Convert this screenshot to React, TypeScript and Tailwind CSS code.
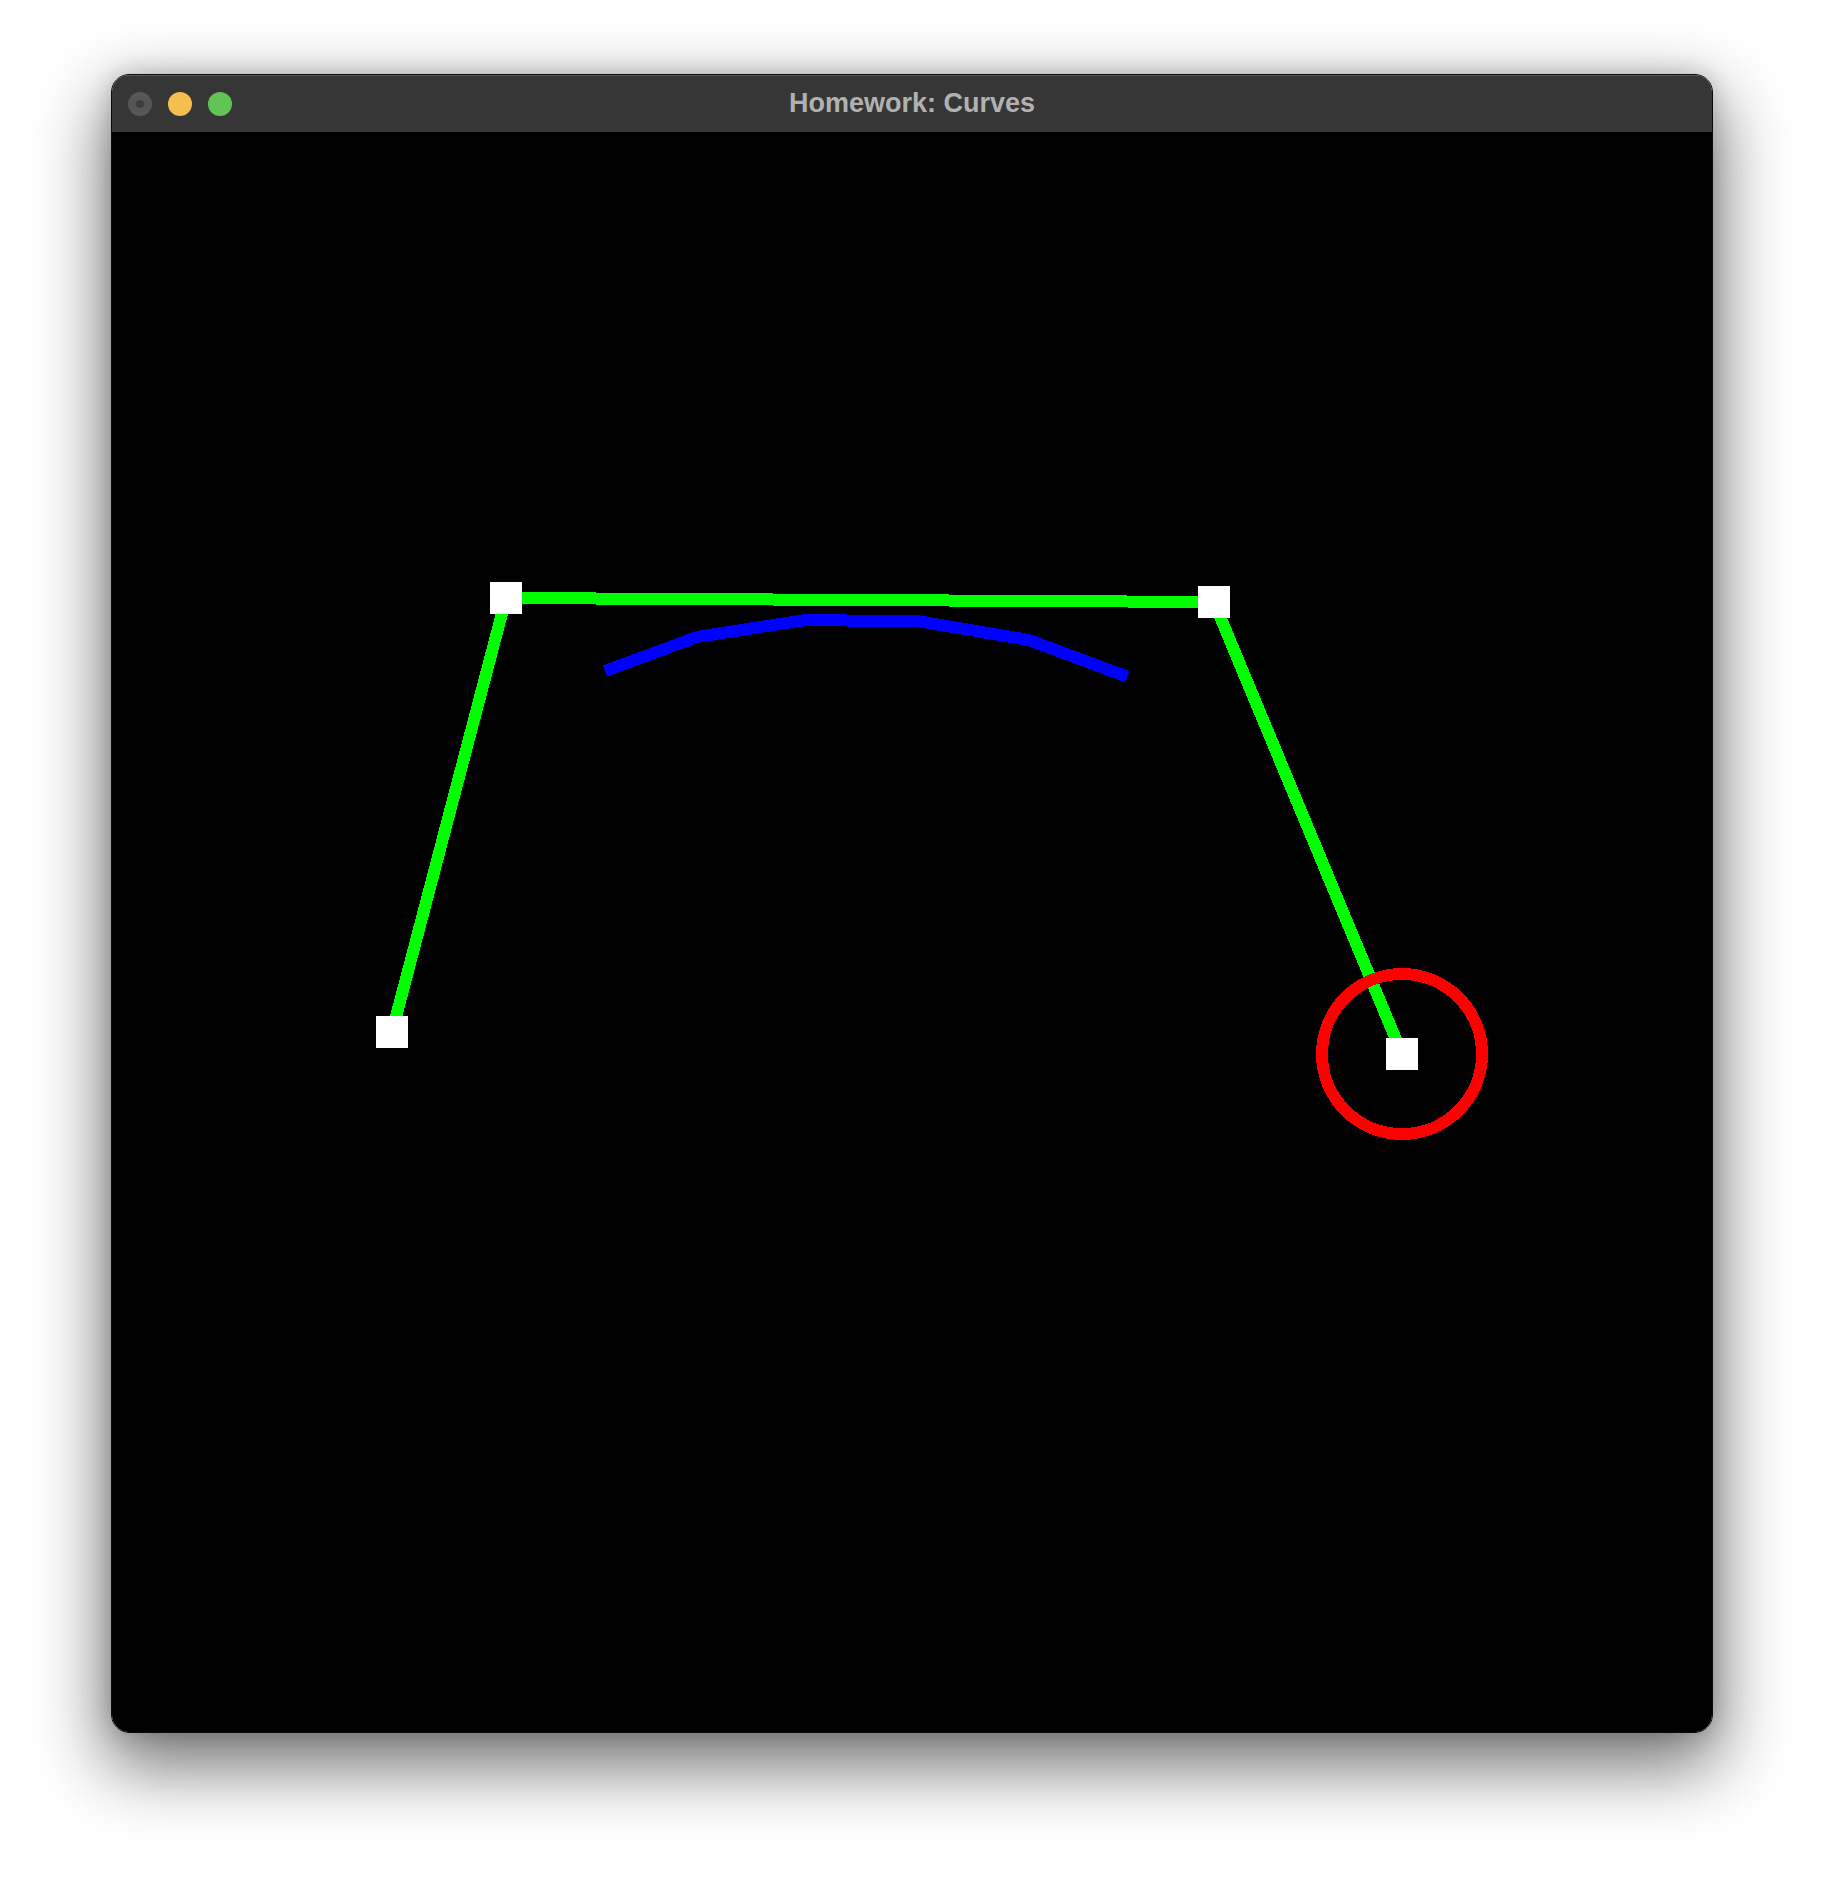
import React from "react";

const P = [
  [280, 900],
  [394, 466],
  [1102, 470],
  [1290, 922],
];

function bspline(n: number) {
  const pts: string[] = [];
  for (let i = 0; i <= n; i++) {
    const t = i / n;
    const b0 = ((1 - t) ** 3) / 6;
    const b1 = (3 * t ** 3 - 6 * t ** 2 + 4) / 6;
    const b2 = (-3 * t ** 3 + 3 * t ** 2 + 3 * t + 1) / 6;
    const b3 = t ** 3 / 6;
    const x = b0 * P[0][0] + b1 * P[1][0] + b2 * P[2][0] + b3 * P[3][0];
    const y = b0 * P[0][1] + b1 * P[1][1] + b2 * P[2][1] + b3 * P[3][1];
    pts.push(`${x.toFixed(1)},${y.toFixed(1)}`);
  }
  return pts.join(" ");
}

export default function App() {
  const curve = bspline(5);
  return (
    <div className="w-[1824px] h-[1880px] bg-white pt-[74px] pl-[111px]" style={{ fontFamily: '"Liberation Sans", Arial, sans-serif' }}>
      <div className="w-[1602px] rounded-[18px] border border-[#0a0a0a] overflow-hidden shadow-[0_28px_70px_6px_rgba(0,0,0,0.55),0_0_24px_rgba(0,0,0,0.18)]">
        <div className="relative h-[57px] bg-[#363636] border-t border-[#5a5a5a] flex items-center">
          <div className="flex items-center gap-4 pl-[16px]">
            <div className="w-6 h-6 rounded-full bg-[#565656] flex items-center justify-center">
              <div className="w-2 h-2 rounded-full bg-[#3e3e3e]" />
            </div>
            <div className="w-6 h-6 rounded-full bg-[#f4bf4f]" />
            <div className="w-6 h-6 rounded-full bg-[#61c554]" />
          </div>
          <div className="absolute inset-0 flex items-center justify-center text-[27px] font-bold text-[#b1b1b1] pb-[1px]">
            Homework: Curves
          </div>
        </div>
        <div className="w-[1600px] h-[1600px] bg-black">
          <svg width="1600" height="1600" viewBox="0 0 1600 1600" className="block" shapeRendering="crispEdges">
            <polyline
              points={P.map((p) => p.join(",")).join(" ")}
              fill="none"
              stroke="#00ff00"
              strokeWidth={12}
              strokeLinejoin="miter"
            />
            <polyline points={curve} fill="none" stroke="#0000ff" strokeWidth={12} strokeLinejoin="bevel" />
            <circle cx={P[3][0]} cy={P[3][1]} r={80} fill="none" stroke="#ff0000" strokeWidth={12} />
            {P.map((p, i) => (
              <rect key={i} x={p[0] - 16} y={p[1] - 16} width={32} height={32} fill="#ffffff" />
            ))}
          </svg>
        </div>
      </div>
    </div>
  );
}
